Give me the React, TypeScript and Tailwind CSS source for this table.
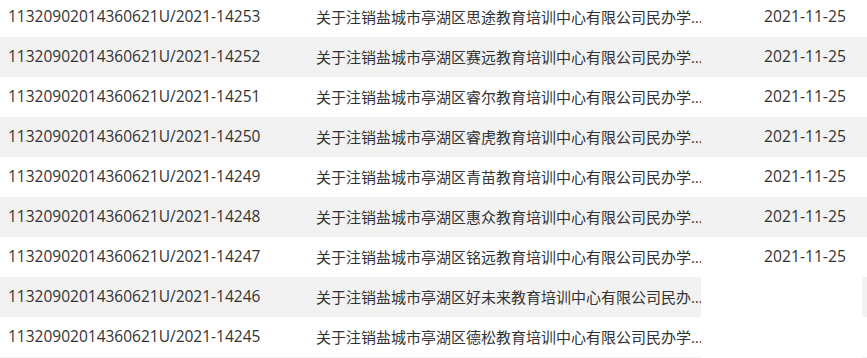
import React from 'react';

interface Row {
  code: string;
  title: string;
  date: string;
}

const rows: Row[] = [
  { code: '11320902014360621U/2021-14253', title: '关于注销盐城市亭湖区思途教育培训中心有限公司民办学校办学许可证的公告', date: '2021-11-25' },
  { code: '11320902014360621U/2021-14252', title: '关于注销盐城市亭湖区赛远教育培训中心有限公司民办学校办学许可证的公告', date: '2021-11-25' },
  { code: '11320902014360621U/2021-14251', title: '关于注销盐城市亭湖区睿尔教育培训中心有限公司民办学校办学许可证的公告', date: '2021-11-25' },
  { code: '11320902014360621U/2021-14250', title: '关于注销盐城市亭湖区睿虎教育培训中心有限公司民办学校办学许可证的公告', date: '2021-11-25' },
  { code: '11320902014360621U/2021-14249', title: '关于注销盐城市亭湖区青苗教育培训中心有限公司民办学校办学许可证的公告', date: '2021-11-25' },
  { code: '11320902014360621U/2021-14248', title: '关于注销盐城市亭湖区惠众教育培训中心有限公司民办学校办学许可证的公告', date: '2021-11-25' },
  { code: '11320902014360621U/2021-14247', title: '关于注销盐城市亭湖区铭远教育培训中心有限公司民办学校办学许可证的公告', date: '2021-11-25' },
  { code: '11320902014360621U/2021-14246', title: '关于注销盐城市亭湖区好未来教育培训中心有限公司民办学校办学许可证的公告', date: '' },
  { code: '11320902014360621U/2021-14245', title: '关于注销盐城市亭湖区德松教育培训中心有限公司民办学校办学许可证的公告', date: '' },
  { code: '11320902014360621U/2021-14244', title: '', date: '' },
];

const App: React.FC = () => {
  return (
    <div
      className="w-[867px] h-[358px] overflow-hidden bg-white text-[#333] text-[15px]"
      style={{ fontFamily: '"Open Sans", "Noto Sans CJK SC", sans-serif' }}
    >
      <div className="-mt-[3px]">
        {rows.map((row, i) => {
          const striped = i % 2 === 1;
          const bg = striped ? 'bg-[#f2f2f2]' : 'bg-white';
          return (
            <div key={row.code} className="flex h-[40px] items-center">
              <div className={`w-[308px] shrink-0 h-full flex items-center pl-2 text-[15.5px] ${bg}`}>
                <span className="whitespace-nowrap">{row.code}</span>
              </div>
              <div className={`w-[393px] shrink-0 h-full flex items-center pl-2 ${bg}`}>
                <span className="block shrink-0 w-[390px] whitespace-nowrap overflow-hidden text-ellipsis">{row.title}</span>
              </div>
              <div className={`w-[161px] shrink-0 h-full flex items-center pl-[63px] text-[15.7px] ${row.date ? bg : 'bg-white'}`}>
                {row.date}
              </div>
              <div className={`flex-1 h-full ${bg}`} />
            </div>
          );
        })}
      </div>
    </div>
  );
};

export default App;
